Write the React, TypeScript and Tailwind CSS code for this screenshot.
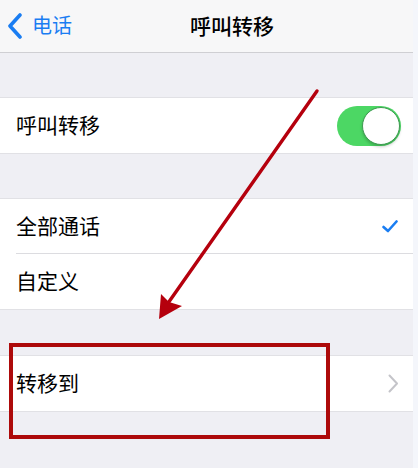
import React from "react";

function Row({ children, border = false }: { children: React.ReactNode; border?: boolean }) {
  return (
    <div className="relative flex h-[55px] items-center bg-white pl-[16px] pr-[12px]">
      {children}
      {border && <div className="absolute bottom-0 left-[16px] right-0 h-px bg-[#dcdce0]" />}
    </div>
  );
}

export default function App() {
  return (
    <div
      className="relative flex h-[468px] w-[418px] overflow-hidden bg-[#f4f6fb]"
      style={{ fontFamily: '"Noto Sans CJK SC", "Noto Sans", sans-serif' }}
    >
      <div className="flex w-[413px] flex-col bg-[#efeff4]">
        {/* Nav bar */}
        <div className="relative flex h-[53px] shrink-0 items-center border-b border-[#cfcfd3] bg-[#f7f7f8]">
          <div className="flex items-center pl-[7px] text-[#1a7df2]">
            <svg width="16" height="26" viewBox="0 0 16 26" fill="none">
              <path d="M13 2 L3 13 L13 24" stroke="#1a7df2" strokeWidth="3.6" strokeLinecap="round" strokeLinejoin="round" />
            </svg>
            <span className="ml-[9px] pb-[2px] text-[20px] leading-none">电话</span>
          </div>
          <div className="absolute left-[190px] top-0 flex h-full items-center pb-[2px] text-[21px] font-medium leading-none text-black">
            呼叫转移
          </div>
        </div>

        <div className="h-[44px] shrink-0" />

        <div className="border-y border-[#e1e1e5]">
          <Row>
            <span className="flex-1 pb-[3px] text-[21px] leading-none text-black">呼叫转移</span>
            <div className="relative h-[40px] w-[64px] rounded-full bg-[#4cd764]">
              <div className="absolute right-[1px] top-[1px] h-[38px] w-[38px] rounded-full border border-[#3f9a52] bg-white shadow-[0_2px_3px_rgba(0,0,0,0.2)]" />
            </div>
          </Row>
        </div>

        <div className="h-[44px] shrink-0" />

        <div className="border-y border-[#e1e1e5]">
          <Row border>
            <span className="flex-1 pb-[3px] text-[21px] leading-none text-black">全部通话</span>
            <svg width="16" height="13" viewBox="0 0 16 13" fill="none" className="mr-[3px]">
              <path d="M1.5 7 L6 11 L14.5 1.5" stroke="#1a7df2" strokeWidth="2.6" strokeLinecap="round" strokeLinejoin="round" />
            </svg>
          </Row>
          <Row>
            <span className="flex-1 pb-[3px] text-[21px] leading-none text-black">自定义</span>
          </Row>
        </div>

        <div className="h-[45px] shrink-0" />

        <div className="border-y border-[#e1e1e5]">
          <Row>
            <span className="flex-1 pb-[3px] text-[21px] leading-none text-black">转移到</span>
            <svg width="11" height="19" viewBox="0 0 11 19" fill="none" className="mr-[2px]">
              <path d="M1.5 1.5 L9 9.5 L1.5 17.5" stroke="#c4c4c9" strokeWidth="2" strokeLinecap="round" strokeLinejoin="round" />
            </svg>
          </Row>
        </div>
      </div>

      {/* Annotation overlay */}
      <svg className="pointer-events-none absolute left-0 top-0" width="418" height="468" viewBox="0 0 418 468">
        <line x1="317" y1="91" x2="166" y2="306" stroke="#b5000d" strokeWidth="3.4" strokeLinecap="round" />
        <polygon points="159,319 161,294 169,302 182,306" fill="#b5000d" />
        <rect x="11" y="345" width="317" height="92" fill="none" stroke="#ad0a0a" strokeWidth="4" />
      </svg>
    </div>
  );
}
